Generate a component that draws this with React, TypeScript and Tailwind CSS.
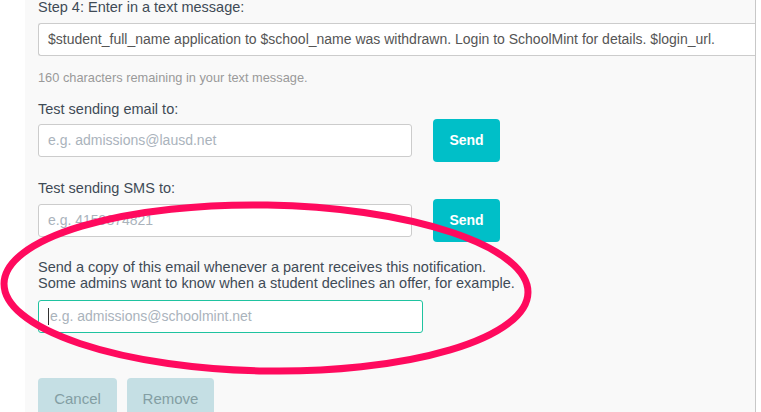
import React from "react";

const font = { fontFamily: '"Liberation Sans", Arial, sans-serif' };

function Field({ placeholder, width, focused }: { placeholder: string; width: string; focused?: boolean }) {
  return (
    <div
      className={`${width} h-[33px] shrink-0 rounded-[3px] bg-white flex items-center pl-[9px] text-[14px] ${
        focused ? "border border-[#1fc3a0]" : "border border-[#cccccc]"
      }`}
    >
      {focused && <span className="w-px h-[17px] bg-[#333] mr-[1px]" />}
      <span className="text-[#aab3bc] whitespace-nowrap">{placeholder}</span>
    </div>
  );
}

function SendButton() {
  return (
    <button className="w-[67px] h-[43px] shrink-0 rounded-[4px] bg-[#00bfc8] text-white text-[14px] font-bold">
      Send
    </button>
  );
}

export default function App() {
  return (
    <div className="relative w-[761px] h-[412px] overflow-hidden bg-white" style={font}>
      <div className="ml-[25px] w-[731px] h-full bg-[#f9f9f9] border-r border-[#c8c8c8] pl-[13px] flex flex-col text-[#3f4b56]">
        <div className="shrink-0 mt-[-3px] text-[14.5px] leading-[20px]">Step 4: Enter in a text message:</div>
        <div className="shrink-0 mt-[6px] w-[717px] h-[33px] rounded-l-[3px] bg-white border border-r-0 border-[#cccccc] flex items-center pl-[9px] text-[14px] text-[#555] whitespace-nowrap">
          $student_full_name application to $school_name was withdrawn. Login to SchoolMint for details. $login_url.
        </div>
        <div className="shrink-0 mt-[13px] text-[12.8px] leading-[17px] text-[#9a9a9a]">
          160 characters remaining in your text message.
        </div>
        <div className="shrink-0 mt-[13px] text-[14.5px] leading-[20px]">Test sending email to:</div>
        <div className="shrink-0 flex items-center gap-[21px]">
          <Field placeholder="e.g. admissions@lausd.net" width="w-[374px]" />
          <SendButton />
        </div>
        <div className="shrink-0 mt-[16px] text-[14.5px] leading-[20px]">Test sending SMS to:</div>
        <div className="shrink-0 mt-[1px] flex items-center gap-[21px]">
          <Field placeholder="e.g. 4159874821" width="w-[374px]" />
          <SendButton />
        </div>
        <div className="shrink-0 mt-[17px] text-[14.5px] leading-[16px]">
          <div>Send a copy of this email whenever a parent receives this notification.</div>
          <div>Some admins want to know when a student declines an offer, for example.</div>
        </div>
        <div className="shrink-0 mt-[9px]">
          <Field placeholder="e.g. admissions@schoolmint.net" width="w-[385px]" focused />
        </div>
        <div className="shrink-0 mt-[45px] flex gap-[10px]">
          <button className="w-[79px] h-[43px] shrink-0 rounded-[4px] bg-[#c5dfe4] text-[#839ea3] text-[15px]">Cancel</button>
          <button className="w-[87px] h-[43px] shrink-0 rounded-[4px] bg-[#c5dfe4] text-[#839ea3] text-[15px]">Remove</button>
        </div>
      </div>
      <svg className="absolute left-0 top-0 pointer-events-none" width="761" height="412" viewBox="0 0 761 412">
        <ellipse
          cx="266"
          cy="288"
          rx="262"
          ry="83"
          fill="none"
          stroke="#ff0a5e"
          strokeWidth="7"
          transform="rotate(1 266 288)"
        />
      </svg>
    </div>
  );
}
